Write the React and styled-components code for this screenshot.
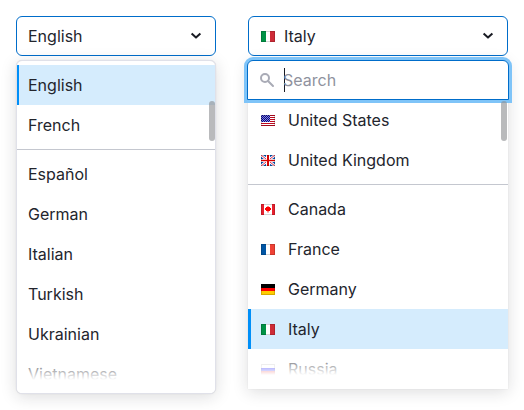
import React from "react";
import styled, { createGlobalStyle } from "styled-components";

const Global = createGlobalStyle`
  * { box-sizing: border-box; }
  body {
    margin: 0;
    background: #fff;
    color: #23252d;
    font-family: Inter, "Liberation Sans", sans-serif;
    font-size: 16px;
    line-height: 24px;
  }
`;

const Page = styled.main`
  display: flex;
  align-items: flex-start;
  gap: 32px;
  height: 410px;
  padding: 16px;
  overflow: hidden;
`;

const Select = styled.section`
  display: flex;
  flex-direction: column;
  gap: 4px;
  flex: none;
  width: ${(p) => p.$width}px;
`;

const Trigger = styled.button`
  display: flex;
  align-items: center;
  height: 40px;
  padding: 0 11px 0 ${(p) => p.$inset}px;
  border: 1px solid #006dca;
  border-radius: 6px;
  background: #fff;
  color: inherit;
  font: inherit;
  text-align: left;
`;

const TriggerText = styled.span`
  flex: 1;
  padding-left: ${(p) => (p.$withFlag ? 9 : 0)}px;
`;

const shadow = "0 0 1px rgba(25, 27, 35, 0.16), 0 3px 16px rgba(25, 27, 35, 0.15)";

const Menu = styled.div`
  position: relative;
  height: 334px;
  padding-top: 4px;
  overflow: hidden;
  border: 1px solid #e0e1e9;
  border-radius: 6px;
  background: #fff;
  box-shadow: ${shadow};
`;

const SearchMenu = styled.div`
  display: flex;
  flex-direction: column;
  height: 329px;
  background: #fff;
  border-radius: 6px 6px 0 0;
  box-shadow: ${shadow};
`;

const SearchField = styled.label`
  position: relative;
  z-index: 1;
  display: flex;
  flex: none;
  align-items: center;
  height: 40px;
  margin: 0 -1px;
  padding-left: 11px;
  border: 1px solid #006dca;
  border-radius: 6px 6px 0 0;
  background: #fff;
  box-shadow: 0 0 0 3px #7fc4f8;
`;

const Caret = styled.span`
  width: 1px;
  height: 24px;
  margin: 0 -2px 0 9px;
  background: #191b23;
`;

const Placeholder = styled.span`
  color: #8f929e;
`;

const ListArea = styled.div`
  position: relative;
  flex: 1;
  overflow: hidden;
`;

const Option = styled.div`
  display: flex;
  align-items: center;
  gap: 13px;
  height: 40px;
  padding-left: ${(p) => p.$inset}px;
  background: ${(p) => (p.$selected ? "#d5ecfd" : "#fff")};
  box-shadow: ${(p) => (p.$selected ? `inset ${p.$bar}px 0 #008ff8` : "none")};
`;

const Divider = styled.hr`
  height: 1px;
  margin: 4px 0;
  border: 0;
  background: #c4c7cf;
`;

const Thumb = styled.span`
  position: absolute;
  z-index: 2;
  top: ${(p) => p.$top}px;
  right: ${(p) => p.$right}px;
  width: 6px;
  height: 40px;
  border-radius: 3px;
  background: rgba(138, 140, 144, 0.6);
`;

const Fade = styled.span`
  position: absolute;
  inset: auto 0 0;
  height: ${(p) => p.$height}px;
  background: linear-gradient(rgba(255, 255, 255, 0), #fff 26px);
`;

const FlagSvg = styled.svg`
  display: block;
  flex: none;
  width: 14px;
  height: 11px;
`;

const Icon = styled.svg`
  display: block;
  flex: none;
`;

const Vertical = ({ a, b, c }) => (
  <>
    <path fill={a} d="M0 0h5v11H0z" />
    <path fill={b} d="M5 0h4v11H5z" />
    <path fill={c} d="M9 0h5v11H9z" />
  </>
);

const starRows = [0, 1, 2, 3, 4, 5, 6];

const flags = {
  it: <Vertical a="#009246" b="#fff" c="#ce2b37" />,
  fr: <Vertical a="#0055a4" b="#fff" c="#ef4135" />,
  us: (
    <>
      <path fill="#fff" d="M0 0h14v11H0z" />
      <path stroke="#bf0a20" d="M0 .5h14M0 2.5h14M0 4.5h14M0 6.5h14M0 8.5h14M0 10.5h14" />
      <path fill="#000090" d="M0 0h9v7H0z" />
      {starRows.map((y) => (
        <path
          key={y}
          stroke="#8d8dd0"
          strokeDasharray="1 1"
          d={`M${y % 2} ${y + 0.5}H9`}
        />
      ))}
    </>
  ),
  gb: (
    <>
      <path fill="#0052b4" d="M0 0h14v11H0z" />
      <path stroke="#fff" strokeWidth="2.6" d="m0 0 14 11M14 0 0 11" />
      <path stroke="#d80027" strokeWidth=".8" d="m0 0 14 11M14 0 0 11" />
      <path fill="#fff" d="M5 0h4v11H5zM0 4h14v3H0z" />
      <path fill="#d80000" d="M6 0h2v11H6zM0 5h14v1H0z" />
      <path fill="#d80000" fillOpacity=".2" d="M0 4h14v3H0z" />
    </>
  ),
  ca: (
    <>
      <path fill="#fff" d="M0 0h14v11H0z" />
      <path fill="#e8202e" d="M0 0h3v11H0zM11 0h3v11h-3z" />
      <path fill="#f00" d="M6.5 2h1v1H9v1h1v2H9v1H7.5v1.5h-1V7H5V6H4V4h1V3h1.5z" />
    </>
  ),
  de: (
    <>
      <path d="M0 0h14v4H0z" />
      <path fill="#f00" d="M0 4h14v3H0z" />
      <path fill="#fc0" d="M0 7h14v4H0z" />
    </>
  ),
  ru: (
    <>
      <path fill="#fff" d="M0 0h14v4H0z" />
      <path fill="#00f" d="M0 4h14v3H0z" />
      <path fill="#e00000" d="M0 7h14v4H0z" />
    </>
  ),
};

const Flag = ({ code }) => (
  <FlagSvg viewBox="0 0 14 11">
    {flags[code]}
    <path fill="none" stroke="#000" strokeOpacity=".16" d="M.5.5h13v10H.5z" />
  </FlagSvg>
);

const Chevron = () => (
  <Icon width="16" height="16" viewBox="0 0 16 16">
    <path
      d="m3.6 5.6 4.4 4 4.4-4"
      fill="none"
      stroke="#191b23"
      strokeWidth="2"
      strokeLinejoin="round"
    />
  </Icon>
);

const SearchIcon = () => (
  <Icon width="16" height="16" viewBox="0 0 16 16" fill="none" stroke="#a9abb6" strokeWidth="2">
    <circle cx="6" cy="6" r="4" />
    <path d="m9 9 5 5" strokeLinecap="round" />
  </Icon>
);

const pinnedLanguages = ["English", "French"];
const languages = ["Español", "German", "Italian", "Turkish", "Ukrainian", "Vietnamese"];
const pinnedCountries = [["us", "United States"], ["gb", "United Kingdom"]];
const countries = [
  ["ca", "Canada"],
  ["fr", "France"],
  ["de", "Germany"],
  ["it", "Italy"],
  ["ru", "Russia"],
];

const LanguageOption = ({ name }) => (
  <Option $inset={11} $bar={2} $selected={name === "English"}>
    {name}
  </Option>
);

const CountryOption = ({ code, name }) => (
  <Option $inset={13} $bar={3} $selected={code === "it"}>
    <Flag code={code} />
    {name}
  </Option>
);

export default function App() {
  return (
    <>
      <Global />
      <Page>
        <Select $width={200}>
          <Trigger $inset={11}>
            <TriggerText>English</TriggerText>
            <Chevron />
          </Trigger>
          <Menu>
            {pinnedLanguages.map((n) => <LanguageOption key={n} name={n} />)}
            <Divider />
            {languages.map((n) => <LanguageOption key={n} name={n} />)}
            <Thumb $top={40} $right={0} />
            <Fade $height={39} />
          </Menu>
        </Select>
        <Select $width={260}>
          <Trigger $inset={12}>
            <Flag code="it" />
            <TriggerText $withFlag>Italy</TriggerText>
            <Chevron />
          </Trigger>
          <SearchMenu>
            <SearchField>
              <SearchIcon />
              <Caret />
              <Placeholder>Search</Placeholder>
            </SearchField>
            <ListArea>
              {pinnedCountries.map(([c, n]) => <CountryOption key={c} code={c} name={n} />)}
              <Divider />
              {countries.map(([c, n]) => <CountryOption key={c} code={c} name={n} />)}
              <Thumb $top={1} $right={1} />
              <Fade $height={40} />
            </ListArea>
          </SearchMenu>
        </Select>
      </Page>
    </>
  );
}
